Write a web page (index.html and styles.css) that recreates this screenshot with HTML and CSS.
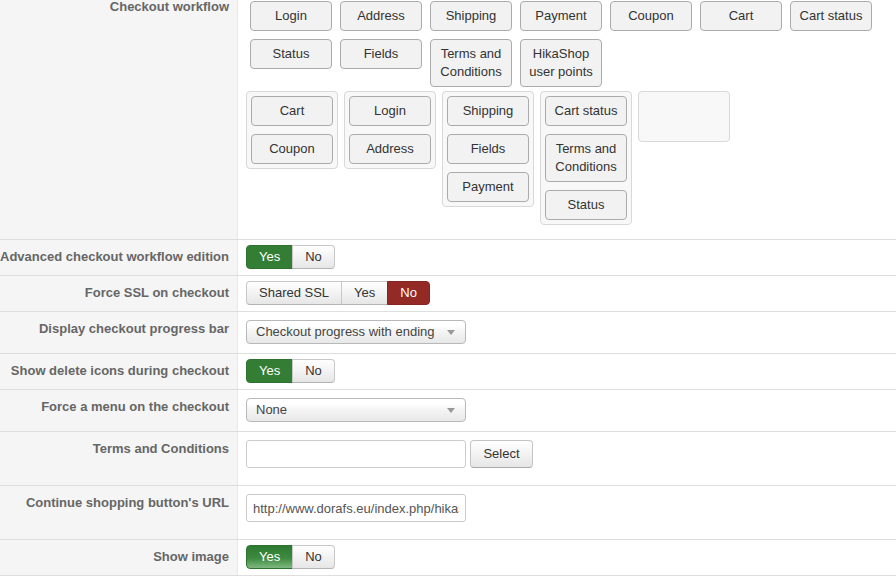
FILE: index.html
```html
<!DOCTYPE html>
<html lang="en">
<head>
<meta charset="utf-8">
<title>Checkout configuration</title>
<link rel="stylesheet" href="styles.css">
</head>
<body>
<div class="config">
  <div class="row">
    <div class="key">Checkout workflow</div>
    <div class="val val-workflow">
      <div class="palette">
        <div class="step">Login</div>
        <div class="step">Address</div>
        <div class="step">Shipping</div>
        <div class="step">Payment</div>
        <div class="step">Coupon</div>
        <div class="step">Cart</div>
        <div class="step">Cart status</div>
        <div class="step">Status</div>
        <div class="step">Fields</div>
        <div class="step">Terms and Conditions</div>
        <div class="step">HikaShop user points</div>
      </div>
      <div class="columns">
        <div class="column">
          <div class="step">Cart</div>
          <div class="step">Coupon</div>
        </div>
        <div class="column">
          <div class="step">Login</div>
          <div class="step">Address</div>
        </div>
        <div class="column">
          <div class="step">Shipping</div>
          <div class="step">Fields</div>
          <div class="step">Payment</div>
        </div>
        <div class="column">
          <div class="step">Cart status</div>
          <div class="step">Terms and Conditions</div>
          <div class="step">Status</div>
        </div>
        <div class="column column-empty"></div>
      </div>
    </div>
  </div>

  <div class="row">
    <div class="key">Advanced checkout workflow edition</div>
    <div class="val val-toggle">
      <div class="btn-group">
        <span class="btn btn-yes">Yes</span><span class="btn">No</span>
      </div>
    </div>
  </div>

  <div class="row">
    <div class="key">Force SSL on checkout</div>
    <div class="val val-toggle">
      <div class="btn-group">
        <span class="btn">Shared SSL</span><span class="btn">Yes</span><span class="btn btn-no">No</span>
      </div>
    </div>
  </div>

  <div class="row">
    <div class="key">Display checkout progress bar</div>
    <div class="val val-select">
      <div class="dropdown"><span>Checkout progress with ending</span><i class="caret"></i></div>
    </div>
  </div>

  <div class="row">
    <div class="key">Show delete icons during checkout</div>
    <div class="val val-toggle">
      <div class="btn-group">
        <span class="btn btn-yes">Yes</span><span class="btn">No</span>
      </div>
    </div>
  </div>

  <div class="row">
    <div class="key">Force a menu on the checkout</div>
    <div class="val val-select">
      <div class="dropdown"><span>None</span><i class="caret"></i></div>
    </div>
  </div>

  <div class="row">
    <div class="key">Terms and Conditions</div>
    <div class="val val-input">
      <div class="input-line">
        <input class="field" type="text" value="">
        <span class="btn btn-select">Select</span>
      </div>
    </div>
  </div>

  <div class="row">
    <div class="key">Continue shopping button's URL</div>
    <div class="val val-input">
      <input class="field" type="text" value="http://www.dorafs.eu/index.php/hikashop-menu-for-categories-listing">
    </div>
  </div>

  <div class="row">
    <div class="key">Show image</div>
    <div class="val val-toggle">
      <div class="btn-group">
        <span class="btn btn-yes btn-yes-hover">Yes</span><span class="btn">No</span>
      </div>
    </div>
  </div>
</div>
</body>
</html>
```

FILE: styles.css
```css
html, body {
  margin: 0;
  padding: 0;
  background: #fff;
}

body {
  font-family: "Liberation Sans", Arial, sans-serif;
  font-size: 13px;
  line-height: 18px;
  color: #333;
  overflow: hidden;
}

.config {
  margin-top: -10px;
}

/* one setting per row: label column + value column */
.row {
  display: grid;
  grid-template-columns: 238px 1fr;
  border-bottom: 1px solid #dedede;
}

.key {
  background: #f5f5f5;
  border-right: 1px solid #e8e8e8;
  text-align: right;
  font-weight: bold;
  color: #666;
  padding: 8px 8px 0 0;
  white-space: nowrap;
}

.val {
  padding-left: 8px;
}

.val-workflow { padding-top: 7px; padding-bottom: 14px; }
.val-toggle   { padding-top: 5px; padding-bottom: 6px; }
.val-select   { padding-top: 8px; padding-bottom: 9px; }
.val-input    { padding-top: 8px; padding-bottom: 17px; }

/* checkout workflow editor */
.palette {
  display: flex;
  flex-wrap: wrap;
  align-items: flex-start;
  gap: 8px;
  padding: 4px;
}

.columns {
  display: flex;
  align-items: flex-start;
  gap: 6px;
}

.column {
  box-sizing: border-box;
  width: 92px;
  display: flex;
  flex-direction: column;
  gap: 8px;
  padding: 4px;
  border: 1px solid #d8d8d8;
  border-radius: 4px;
  background: #f8f8f8;
}

.column-empty {
  min-height: 51px;
}

.step {
  box-sizing: border-box;
  width: 82px;
  padding: 5px 4px;
  border: 1px solid #ababab;
  border-radius: 4px;
  background: #f2f2f2;
  color: #333;
  text-align: center;
}

/* yes / no switches */
.btn-group {
  display: inline-flex;
}

.btn {
  display: inline-block;
  padding: 2px 12px;
  line-height: 18px;
  border: 1px solid #c8c8c8;
  border-bottom-color: #b3b3b3;
  background: linear-gradient(#ffffff, #e6e6e6);
  color: #333;
}

.btn-group .btn + .btn {
  margin-left: -1px;
}

.btn-group .btn:first-child {
  border-radius: 4px 0 0 4px;
}

.btn-group .btn:last-child {
  border-radius: 0 4px 4px 0;
}

.btn-yes {
  background: #337d35;
  border-color: #2d7330;
  color: #fff;
}

.btn-yes-hover {
  background: linear-gradient(#2f7a33 0%, #3d8a3f 55%, #7fb880 100%);
}

.btn-no {
  background: #942a25;
  border-color: #862520;
  color: #fff;
}

/* dropdown lists */
.dropdown {
  box-sizing: border-box;
  width: 220px;
  height: 24px;
  display: flex;
  align-items: center;
  justify-content: space-between;
  padding: 0 10px 0 9px;
  border: 1px solid #b8b8b8;
  border-radius: 4px;
  background: linear-gradient(#ffffff 20%, #f4f4f4 50%, #e8e8e8 100%);
  color: #444;
}

.caret {
  width: 0;
  height: 0;
  border-left: 4px solid transparent;
  border-right: 4px solid transparent;
  border-top: 5px solid #999;
}

/* text fields */
.input-line {
  display: flex;
  gap: 4px;
}

.field {
  box-sizing: border-box;
  width: 220px;
  height: 28px;
  margin: 0;
  padding: 0 6px;
  border: 1px solid #ccc;
  border-radius: 3px;
  font-family: "Liberation Sans", Arial, sans-serif;
  font-size: 13px;
  color: #555;
  background: #fff;
  outline: none;
}

.btn-select {
  box-sizing: border-box;
  height: 28px;
  width: 63px;
  padding: 4px 0;
  text-align: center;
  border-radius: 4px;
  border-color: #c4c4c4;
  border-bottom-color: #a8a8a8;
}
```
